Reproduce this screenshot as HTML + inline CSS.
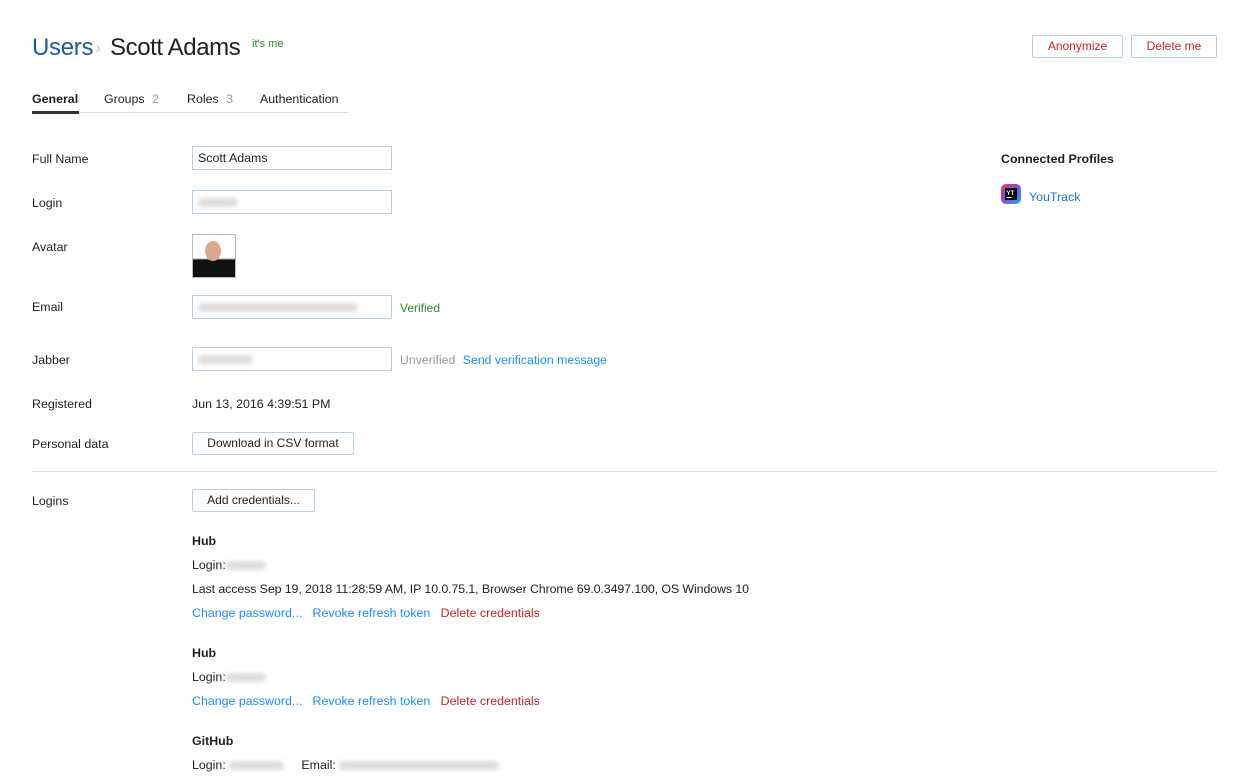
<!DOCTYPE html>
<html><head><meta charset="utf-8"><style>
*{margin:0;padding:0;box-sizing:border-box}
body{width:1248px;height:778px;background:#fff;font-family:"Liberation Sans",sans-serif;font-size:12.4px;color:#1f1f1f;position:relative;overflow:hidden}
.a{position:absolute;white-space:nowrap}
.lbl{left:32px}
.in{position:absolute;left:192px;width:200px;height:24px;border:1px solid #b8cfe3;padding:4px 5px;font-size:12.4px}
.blur{display:inline-block;height:9px;background:#ddd;border-radius:4px;filter:blur(2px);vertical-align:middle}
.btn{position:absolute;height:23px;border:1px solid #b8cfe3;border-radius:2px;font-size:12px;text-align:center;line-height:21px}
.blue{color:#1a8cff}.red{color:#c22}.b{font-weight:bold}
</style></head><body>
<div class="a" style="left:32px;top:34px;font-size:24px;color:#1e5a9a;letter-spacing:-0.3px">Users</div>
<div class="a" style="left:95px;top:38px;font-size:18px;color:#ccc">›</div>
<div class="a" style="left:110px;top:34px;font-size:24px;color:#1f1f1f;letter-spacing:-0.4px">Scott Adams</div>
<div class="a" style="left:252px;top:38px;font-size:11px;color:#2a8a2a">it's me</div>
<div class="btn red" style="left:1032px;top:35px;width:91px">Anonymize</div>
<div class="btn red" style="left:1131px;top:35px;width:86px">Delete me</div>
<div class="a b" style="left:32px;top:92px">General</div>
<div class="a" style="left:104px;top:92px">Groups <span style="color:#999;margin-left:4px">2</span></div>
<div class="a" style="left:187px;top:92px">Roles <span style="color:#999;margin-left:4px">3</span></div>
<div class="a" style="left:260px;top:92px">Authentication</div>
<div class="a" style="left:32px;top:112px;width:316px;height:1px;background:#ddd"></div>
<div class="a" style="left:32px;top:111px;width:47px;height:3px;background:#333"></div>

<div class="a lbl" style="top:152px">Full Name</div>
<div class="in" style="top:146px">Scott Adams</div>
<div class="a lbl" style="top:196px">Login</div>
<div class="in" style="top:190px"><span class="blur" style="width:40px"></span></div>
<div class="a lbl" style="top:240px">Avatar</div>
<div class="a" style="left:192px;top:234px;width:44px;height:44px;border:1px solid #bbb;background:linear-gradient(#fff 55%,#111 60%)"><div style="position:absolute;left:12px;top:6px;width:16px;height:20px;border-radius:50%;background:#d9a88e"></div></div>
<div class="a lbl" style="top:300px">Email</div>
<div class="in" style="top:295px"><span class="blur" style="width:160px"></span></div>
<div class="a" style="left:400px;top:301px;color:#2a8a2a;font-size:12px">Verified</div>
<div class="a lbl" style="top:353px">Jabber</div>
<div class="in" style="top:347px"><span class="blur" style="width:55px"></span></div>
<div class="a" style="left:400px;top:353px;font-size:12.3px"><span style="color:#999">Unverified</span> <span class="blue" style="margin-left:4px">Send verification message</span></div>
<div class="a lbl" style="top:397px">Registered</div>
<div class="a" style="left:192px;top:397px">Jun 13, 2016 4:39:51 PM</div>
<div class="a lbl" style="top:437px">Personal data</div>
<div class="btn" style="left:192px;top:432px;width:162px">Download in CSV format</div>
<div class="a" style="left:32px;top:471px;width:1185px;height:1px;background:#ddd"></div>
<div class="a lbl" style="top:494px">Logins</div>
<div class="btn" style="left:192px;top:489px;width:123px">Add credentials...</div>

<div class="a b" style="left:192px;top:534px">Hub</div>
<div class="a" style="left:192px;top:558px">Login:<span class="blur" style="width:40px"></span></div>
<div class="a" style="left:192px;top:582px;letter-spacing:-0.1px">Last access Sep 19, 2018 11:28:59 AM, IP 10.0.75.1, Browser Chrome 69.0.3497.100, OS Windows 10</div>
<div class="a" style="left:192px;top:606px"><span class="blue">Change password...</span>&nbsp;&nbsp; <span class="blue">Revoke refresh token</span>&nbsp;&nbsp; <span class="red">Delete credentials</span></div>
<div class="a b" style="left:192px;top:646px">Hub</div>
<div class="a" style="left:192px;top:670px">Login:<span class="blur" style="width:40px"></span></div>
<div class="a" style="left:192px;top:694px"><span class="blue">Change password...</span>&nbsp;&nbsp; <span class="blue">Revoke refresh token</span>&nbsp;&nbsp; <span class="red">Delete credentials</span></div>
<div class="a b" style="left:192px;top:734px">GitHub</div>
<div class="a" style="left:192px;top:758px">Login: <span class="blur" style="width:55px"></span> &nbsp;&nbsp;&nbsp; Email: <span class="blur" style="width:160px"></span></div>

<div class="a b" style="left:1001px;top:152px">Connected Profiles</div>
<svg class="a" style="left:1001px;top:184px" width="20" height="20" viewBox="0 0 20 20"><defs><linearGradient id="g" x1="0" y1="0" x2="1" y2="1"><stop offset="0" stop-color="#e8366f"/><stop offset=".5" stop-color="#7b4fd9"/><stop offset="1" stop-color="#1fb5e8"/></linearGradient></defs><rect x="0" y="0" width="20" height="20" rx="5" fill="url(#g)"/><rect x="4" y="4" width="12" height="12" fill="#000"/><text x="5.5" y="11" font-size="6" fill="#fff" font-family="Liberation Sans" font-weight="bold">YT</text><rect x="5.5" y="13" width="5" height="1" fill="#fff"/></svg>
<div class="a blue" style="left:1029px;top:190px;color:#1a73c8">YouTrack</div>
</body></html>
